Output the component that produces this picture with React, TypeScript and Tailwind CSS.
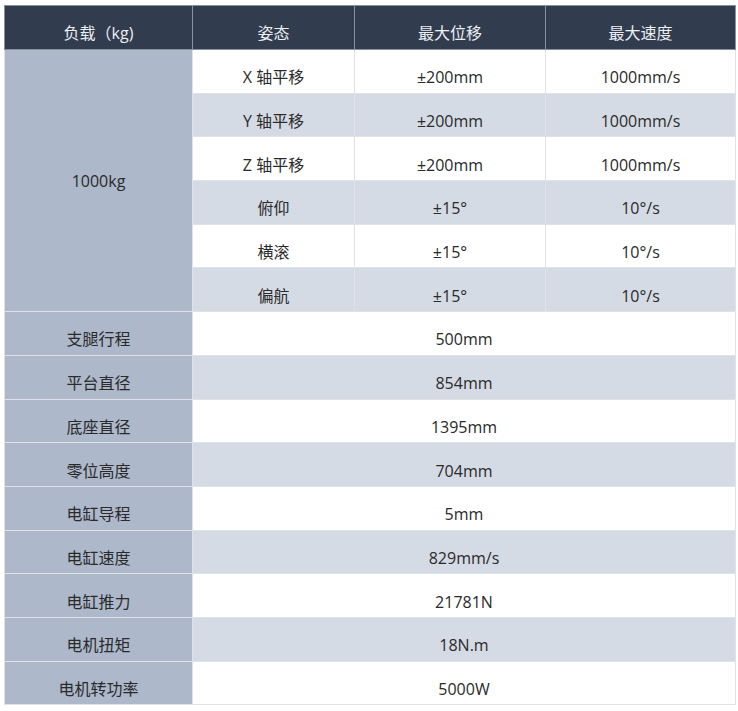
const motions = [
  { name: 'X 轴平移', range: '±200mm', speed: '1000mm/s' },
  { name: 'Y 轴平移', range: '±200mm', speed: '1000mm/s' },
  { name: 'Z 轴平移', range: '±200mm', speed: '1000mm/s' },
  { name: '俯仰', range: '±15°', speed: '10°/s' },
  { name: '横滚', range: '±15°', speed: '10°/s' },
  { name: '偏航', range: '±15°', speed: '10°/s' },
];

const specs = [
  { label: '支腿行程', value: '500mm' },
  { label: '平台直径', value: '854mm' },
  { label: '底座直径', value: '1395mm' },
  { label: '零位高度', value: '704mm' },
  { label: '电缸导程', value: '5mm' },
  { label: '电缸速度', value: '829mm/s' },
  { label: '电缸推力', value: '21781N' },
  { label: '电机扭矩', value: '18N.m' },
  { label: '电机转功率', value: '5000W' },
];

const cell = 'border border-[#dfe2e7] h-[43.7px] p-0 pt-[12px] text-center align-middle';

export default function App() {
  return (
    <div
      className="min-h-screen bg-white px-[4px] pt-[5px]"
      style={{ fontFamily: '"Open Sans", "Noto Sans CJK SC", sans-serif' }}
    >
      <table className="w-[731px] border-collapse border border-[#dcdcdc] text-[16px] text-[#2a2a2a] table-fixed">
        <colgroup>
          <col className="w-[188px]" />
          <col className="w-[162px]" />
          <col className="w-[191px]" />
          <col className="w-[190px]" />
        </colgroup>
        <thead>
          <tr className="bg-[#323c4f] text-[#eceef2]">
            <th className="border border-[#8a919c] h-[44px] p-0 pt-[11px] font-normal">负载（kg)</th>
            <th className="border border-[#8a919c] h-[44px] p-0 pt-[11px] font-normal">姿态</th>
            <th className="border border-[#8a919c] h-[44px] p-0 pt-[11px] font-normal">最大位移</th>
            <th className="border border-[#8a919c] h-[44px] p-0 pt-[11px] font-normal">最大速度</th>
          </tr>
        </thead>
        <tbody>
          {motions.map((m, i) => (
            <tr key={m.name} className={i % 2 === 0 ? 'bg-white' : 'bg-[#d5dbe5]'}>
              {i === 0 && (
                <td rowSpan={6} className="border border-[#dfe2e7] bg-[#adb8ca] text-center align-middle p-0">
                  1000kg
                </td>
              )}
              <td className={cell}>{m.name}</td>
              <td className={cell}>{m.range}</td>
              <td className={cell}>{m.speed}</td>
            </tr>
          ))}
          {specs.map((s, i) => (
            <tr key={s.label} className={i % 2 === 0 ? 'bg-white' : 'bg-[#d5dbe5]'}>
              <td className={`${cell} bg-[#adb8ca]`}>{s.label}</td>
              <td colSpan={3} className={cell}>{s.value}</td>
            </tr>
          ))}
        </tbody>
      </table>
    </div>
  );
}
